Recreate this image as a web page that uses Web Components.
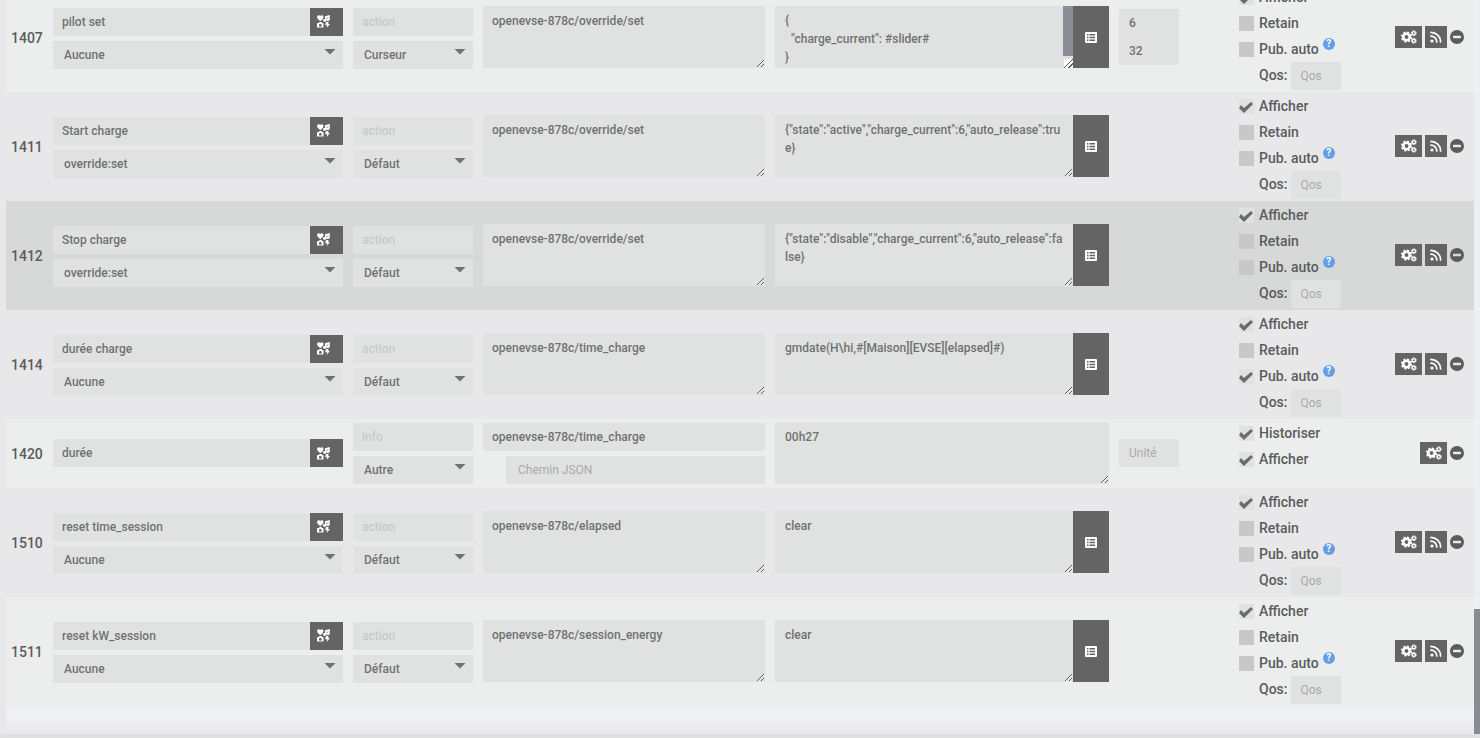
<!DOCTYPE html>
<html lang="fr">
<head>
<meta charset="utf-8">
<meta name="viewport" content="width=device-width, initial-scale=1">
<title>Commandes MQTT</title>
<style>
  :root {
    --field: #e0e2e1;
    --text: #707271;
    --label: #5b5c5c;
    --dark: #646464;
    --page: #e8e8ea;
    --panel: #eeeff1;
  }
  body {
    margin: 0;
    background: var(--page);
    color: var(--label);
    font: 14px/18px Roboto, "Liberation Sans", sans-serif;
  }
</style>
</head>
<body>
<cmd-panel>
  <cmd-table></cmd-table>
</cmd-panel>

<script>
/** Icônes en SVG : [viewBox, contenu] */
const ICONS = {
  icons: ["0 0 13 13", `
    <path d="M3.3 6.200.7 3.700C-.3 2.600 0 .5 1.500.3c.8-.1 1.400.2 1.800.8.4-.6 1-.9 1.800-.8 1.500.2 1.800 2.300.8 3.400z"/>
    <path d="M8 1.200 12.800.1v4.500a1.700 1.400 0 1 1-1.400-1.400V2.500l-2 .5v2.400a1.700 1.400 0 1 1-1.400-1.400z"/>
    <path fill-rule="evenodd" d="M1 8h1l.5-1h2L5 8h.8q.7 0 .7.7v3.200q0 .7-.7.7H.7q-.7 0-.7-.7V8.700Q0 8 1 8zm2.300 1a1.400 1.400 0 1 0 0 2.800 1.400 1.400 0 0 0 0-2.800z"/>
    <path d="M9 7h2.600l-.5 2h1.800L9.700 13l.5-2.800H8.200z"/>`],
  list: ["0 0 12 11", `
    <path fill-rule="evenodd" d="M1 0h10q1 0 1 1v9q0 1-1 1H1q-1 0-1-1V1q0-1 1-1zM2 2v1.500h1.500V2zm2.500 0v1.500H10V2zM2 4.700v1.500h1.500V4.700zm2.500 0v1.500H10V4.700zM2 7.400v1.500h1.500V7.400zm2.500 0v1.500H10V7.400z"/>`],
  cogs: ["0 0 16 14", `
    <g fill="none" stroke="currentColor">
      <circle cx="5.500" cy="7" r="3.200" stroke-width="2.600"/>
      <circle cx="5.500" cy="7" r="4.700" stroke-width="1.800" stroke-dasharray="2 1.690"/>
      <circle cx="12.800" cy="3.200" r="1.600" stroke-width="1.400"/>
      <circle cx="12.800" cy="3.200" r="2.500" stroke-width=".8" stroke-dasharray="1.200 .763"/>
      <circle cx="12.800" cy="10.800" r="1.600" stroke-width="1.400"/>
      <circle cx="12.800" cy="10.800" r="2.500" stroke-width=".8" stroke-dasharray="1.200 .763"/>
    </g>`],
  rss: ["0 0 12 12", `
    <circle cx="2" cy="10" r="1.600"/>
    <path d="M1 5.200A5.800 5.800 0 0 1 6.800 11M1 1.400A9.600 9.600 0 0 1 10.600 11" fill="none" stroke="currentColor" stroke-width="1.700" stroke-linecap="round"/>`],
  minus: ["0 0 14 14", `
    <path fill-rule="evenodd" d="M7 0a7 7 0 1 1 0 14A7 7 0 0 1 7 0zM3.500 5.800q-.5 0-.5.500v1.400q0 .5.500.5h7q.5 0 .5-.5V6.300q0-.5-.5-.5z"/>`]
};

/**
 * Icône
 * @attr {string} name - Nom de l'icône
 */
class AppIcon extends HTMLElement {
  constructor() {
    super();
    this.attachShadow({ mode: "open" });
  }

  connectedCallback() {
    const [box, content] = ICONS[this.getAttribute("name")];
    const [, , width, height] = box.split(" ");
    this.shadowRoot.innerHTML = `
      <style>
        :host { display: block; flex: none; }
        svg { display: block; fill: currentColor; }
      </style>
      <svg viewBox="${box}" width="${width}" height="${height}" aria-hidden="true">${content}</svg>
    `;
  }
}

/**
 * Bouton avec une icône
 * @attr {string} kind - icons, list, cogs, rss, minus
 * @attr {string} label - Texte accessible
 */
class IconButton extends HTMLElement {
  constructor() {
    super();
    this.attachShadow({ mode: "open" });
  }

  connectedCallback() {
    const kind = this.getAttribute("kind");
    this.shadowRoot.innerHTML = `
      <style>
        :host { display: flex; flex: none; }
        button {
          display: flex;
          align-items: center;
          justify-content: center;
          height: 22px;
          margin: 0;
          padding: 0;
          border: 0;
          background: var(--dark);
          color: #fff;
          cursor: pointer;
        }
        .icons { width: 33px; height: 28px; padding-right: 6px; }
        .list { width: 36px; height: auto; }
        .cogs { width: 27px; }
        .rss { width: 22px; }
        .minus { width: 14px; background: none; color: var(--label); }
      </style>
      <button type="button" class="${kind}" aria-label="${this.getAttribute("label")}">
        <app-icon name="${kind}"></app-icon>
      </button>
    `;
  }
}

/**
 * Champ de saisie, liste ou zone de texte
 * @attr {string} type - text, select, area
 * @attr {string} value, placeholder, label
 * @attr wide - Marge intérieure plus large
 * @attr scroll - Affiche la barre de défilement
 */
class FormField extends HTMLElement {
  constructor() {
    super();
    this.attachShadow({ mode: "open" });
  }

  connectedCallback() {
    this.shadowRoot.innerHTML = `
      <style>
        :host { display: grid; flex: 1; min-width: 0; }
        input, select, textarea {
          grid-area: 1 / 1;
          box-sizing: border-box;
          width: 100%;
          min-width: 0;
          height: 28px;
          margin: 0;
          padding: 0 9px;
          border: 0;
          border-radius: 0;
          outline: 0;
          background: var(--field);
          color: var(--text);
          font: 500 12px/18px Roboto, "Liberation Sans", sans-serif;
        }
        input:disabled { color: #c8caca; }
        ::placeholder { color: #a8aaa9; font-weight: 400; opacity: 1; }
        :host([wide]) input { padding: 0 10px; }
        :host([indent]) input { padding: 0 12px; }
        select { appearance: none; padding: 0 11px; }
        .arrow {
          grid-area: 1 / 1;
          justify-self: end;
          width: 12px;
          height: 6px;
          margin: 8px 7px 0 0;
          background: var(--text);
          clip-path: polygon(0 0, 100% 0, 50% 100%);
          pointer-events: none;
        }
        textarea { display: block; height: 62px; padding: 6px 9px; resize: vertical; overflow: hidden; }
        :host([wide]) textarea { padding: 6px 10px; }
        :host([scroll]) textarea::-webkit-resizer {
          background: linear-gradient(135deg,
            #fff 46%, #555 46%, #555 54%, #fff 54%, #fff 71%, #555 71%, #555 79%, #fff 79%)
            right bottom / 9px 9px no-repeat;
        }
        .bar {
          grid-area: 1 / 1;
          justify-self: end;
          width: 10px;
          height: 50px;
          background: #8d8d95;
        }
      </style>
    `;
    this.shadowRoot.append(...this._createControl());
  }

  /**
   * Crée le contrôle selon le type
   * @private
   */
  _createControl() {
    const type = this.getAttribute("type") || "text";
    const value = this.getAttribute("value") || "";
    const tags = { text: "input", select: "select", area: "textarea" };
    const control = document.createElement(tags[type]);
    control.setAttribute("aria-label", this.getAttribute("label"));

    if (type === "select") {
      control.add(new Option(value));
      const arrow = document.createElement("span");
      arrow.className = "arrow";
      return [control, arrow];
    }

    if (type === "area") {
      control.textContent = value;
      control.spellcheck = false;
      if (!this.hasAttribute("scroll")) return [control];
      const bar = document.createElement("span");
      bar.className = "bar";
      return [control, bar];
    }

    control.type = "text";
    control.setAttribute("value", value);
    control.placeholder = this.getAttribute("placeholder") || "";
    control.disabled = this.hasAttribute("disabled");
    return [control];
  }
}

/** Empile des champs ; l'attribut "row" les met côte à côte */
class FieldStack extends HTMLElement {
  constructor() {
    super();
    this.attachShadow({ mode: "open" });
    this.shadowRoot.innerHTML = `
      <style>
        :host { display: flex; flex-direction: column; gap: 5px; }
        :host([row]) { flex-direction: row; gap: 0; }
        :host([tight]) { width: 60px; gap: 0; }
        ::slotted([indent]) { margin-left: 23px; }
      </style>
      <slot></slot>
    `;
  }
}

/**
 * Case à cocher avec son libellé (slot)
 * @attr checked - Case cochée
 * @attr help - Affiche l'aide
 */
class CheckOption extends HTMLElement {
  constructor() {
    super();
    this.attachShadow({ mode: "open" });
  }

  connectedCallback() {
    const checked = this.hasAttribute("checked") ? "checked" : "";
    const help = this.hasAttribute("help") ? `<span class="help" title="Publication automatique">?</span>` : "";
    this.shadowRoot.innerHTML = `
      <style>
        :host { display: flex; height: 26px; }
        label { display: flex; align-items: center; gap: 5px; font-weight: 500; }
        input {
          appearance: none;
          display: grid;
          width: 15px;
          height: 15px;
          margin: 1px 0 0;
          background: #c8c8c8;
        }
        input:checked { background: var(--field); }
        input:checked::before {
          content: "";
          height: 12px;
          margin-top: 3px;
          background: #6b6b6b;
          clip-path: polygon(0 6px, 2px 3px, 5px 6px, 12px 0, 14px 2px, 5px 11px);
        }
        .help {
          width: 12px;
          height: 12px;
          margin: 2px 0 0 4px;
          border-radius: 50%;
          background: #629fe6;
          color: #fff;
          font: 700 10px/12px Roboto, sans-serif;
          text-align: center;
        }
      </style>
      <label><input type="checkbox" ${checked}><slot></slot></label>${help}
    `;
  }
}

/** Champ Qos */
class QosField extends HTMLElement {
  constructor() {
    super();
    this.attachShadow({ mode: "open" });
    this.shadowRoot.innerHTML = `
      <style>
        :host { display: flex; gap: 3px; padding-left: 20px; font-weight: 500; line-height: 26px; }
        form-field { flex: 0 0 50px; }
      </style>
      <span>Qos:</span>
      <form-field wide label="Qos" placeholder="Qos"></form-field>
    `;
  }
}

const JSON_START = '{"state":"active","charge_current":6,"auto_release":true}';
const JSON_STOP = '{"state":"disable","charge_current":6,"auto_release":false}';

const COMMANDS = [
  { id: 1407, name: "pilot set", source: "Aucune", subType: "Curseur", topic: "override/set",
    value: '{\n  "charge_current": #slider#\n}', scroll: true, limits: [6, 32] },
  { id: 1411, name: "Start charge", source: "override:set", topic: "override/set", value: JSON_START },
  { id: 1412, name: "Stop charge", source: "override:set", topic: "override/set", value: JSON_STOP, active: true },
  { id: 1414, name: "durée charge", source: "Aucune", topic: "time_charge",
    value: "gmdate(H\\hi,#[Maison][EVSE][elapsed]#)", auto: true },
  { id: 1420, name: "durée", info: true, subType: "Autre", topic: "time_charge", value: "00h27" },
  { id: 1510, name: "reset time_session", source: "Aucune", topic: "elapsed", value: "clear" },
  { id: 1511, name: "reset kW_session", source: "Aucune", topic: "session_energy", value: "clear" }
];

/** Tableau des commandes */
class CmdTable extends HTMLElement {
  constructor() {
    super();
    this.attachShadow({ mode: "open" });
    this._render();
  }

  /** @private */
  _escape(text) {
    return text.replace(/&/g, "&amp;").replace(/"/g, "&quot;");
  }

  /** @private */
  _renderOptions(cmd) {
    if (cmd.info) {
      return `
        <check-option checked>Historiser</check-option>
        <check-option checked>Afficher</check-option>`;
    }
    return `
      <check-option checked>Afficher</check-option>
      <check-option>Retain</check-option>
      <check-option help ${cmd.auto ? "checked" : ""}>Pub. auto</check-option>
      <qos-field></qos-field>`;
  }

  /** @private */
  _renderExtra(cmd) {
    if (cmd.info) {
      return `<field-stack tight><form-field wide label="Unité" placeholder="Unité"></form-field></field-stack>`;
    }
    if (!cmd.limits) return "";
    return `
      <field-stack tight>
        <form-field wide label="Min" value="${cmd.limits[0]}"></form-field>
        <form-field wide label="Max" value="${cmd.limits[1]}"></form-field>
      </field-stack>`;
  }

  /** @private */
  _renderRow(cmd) {
    const topic = `openevse-878c/${cmd.topic}`;
    return `
      <tr class="${cmd.active ? "active" : ""} ${cmd.info ? "info" : ""}">
        <td class="id">${cmd.id}</td>
        <td class="fields">
          <field-stack>
            <field-stack row>
              <form-field label="Nom" value="${cmd.name}"></form-field>
              <icon-button kind="icons" label="Icône"></icon-button>
            </field-stack>
            ${cmd.source ? `<form-field type="select" label="Commande info" value="${cmd.source}"></form-field>` : ""}
          </field-stack>
        </td>
        <td class="fields">
          <field-stack>
            <form-field disabled label="Type" value="${cmd.info ? "info" : "action"}"></form-field>
            <form-field type="select" label="Sous-type" value="${cmd.subType || "Défaut"}"></form-field>
          </field-stack>
        </td>
        <td>
          <field-stack>
            <form-field type="${cmd.info ? "text" : "area"}" label="Topic" value="${topic}"></form-field>
            ${cmd.info ? `<form-field indent label="Chemin JSON" placeholder="Chemin JSON"></form-field>` : ""}
          </field-stack>
        </td>
        <td>
          <field-stack row>
            <form-field wide type="area" label="Valeur" ${cmd.scroll ? "scroll" : ""} value="${this._escape(cmd.value)}"></form-field>
            ${cmd.info ? "" : `<icon-button kind="list" label="Choisir une commande"></icon-button>`}
          </field-stack>
        </td>
        <td>${this._renderExtra(cmd)}</td>
        <td class="options">${this._renderOptions(cmd)}</td>
        <td>
          <div class="actions">
            <icon-button kind="cogs" label="Configurer"></icon-button>
            ${cmd.info ? "" : `<icon-button kind="rss" label="Tester"></icon-button>`}
            <icon-button kind="minus" label="Supprimer"></icon-button>
          </div>
        </td>
      </tr>`;
  }

  /** @private */
  _render() {
    this.shadowRoot.innerHTML = `
      <style>
        :host { display: block; }
        table { width: 100%; table-layout: fixed; border-collapse: collapse; }
        .c-id { width: 42px; }
        .c-name { width: 300px; }
        .c-type { width: 130px; }
        .c-topic { width: 292px; }
        .c-extra, .c-options, .c-actions { width: 120px; }
        tr:nth-child(odd) { background: #eceeed; }
        tr:nth-child(even) { background: var(--page); }
        tr.active, tr:hover { background: #d7d9d8; }
        td { padding: 3px 5px 4px; vertical-align: middle; }
        td.id, td.fields { padding: 4px 5px 3px; }
        td.id { font-weight: 500; }
        .info td.fields { padding: 3px 5px 4px; }
        td.options { padding: 1px 5px 2px; vertical-align: top; }
        .actions { display: flex; align-items: center; justify-content: flex-end; gap: 3px; padding-right: 5px; }
      </style>
      <table>
        <colgroup>
          <col class="c-id"><col class="c-name"><col class="c-type"><col class="c-topic">
          <col><col class="c-extra"><col class="c-options"><col class="c-actions">
        </colgroup>
        <tbody>${COMMANDS.map((cmd) => this._renderRow(cmd)).join("")}</tbody>
      </table>
    `;
  }
}

/** Panneau défilant, affiché à la fin de son contenu */
class CmdPanel extends HTMLElement {
  constructor() {
    super();
    this.attachShadow({ mode: "open" });
    this.shadowRoot.innerHTML = `
      <style>
        :host {
          display: flex;
          box-sizing: border-box;
          height: 100vh;
          padding-left: 6px;
          border-bottom: 4px solid #e0e0e1;
        }
        .content {
          flex: 1;
          min-width: 0;
          overflow-y: auto;
          scrollbar-width: none;
          background: var(--panel);
        }
        .end { height: 28px; background: linear-gradient(#eef0f2 40%, #e9e9eb); }
        .track { display: flex; flex: 0 0 6px; align-items: flex-end; background: var(--panel); }
        .thumb { width: 100%; height: 17%; background: #8b8b93; }
      </style>
      <div class="content"><slot></slot><div class="end"></div></div>
      <div class="track"><div class="thumb"></div></div>
    `;
  }

  connectedCallback() {
    const content = this.shadowRoot.querySelector(".content");
    const scrollToEnd = () => { content.scrollTop = content.scrollHeight; };
    scrollToEnd();
    new ResizeObserver(scrollToEnd).observe(content);
  }
}

// Enregistrer les composants
customElements.define("app-icon", AppIcon);
customElements.define("icon-button", IconButton);
customElements.define("form-field", FormField);
customElements.define("field-stack", FieldStack);
customElements.define("check-option", CheckOption);
customElements.define("qos-field", QosField);
customElements.define("cmd-table", CmdTable);
customElements.define("cmd-panel", CmdPanel);
</script>
</body>
</html>
